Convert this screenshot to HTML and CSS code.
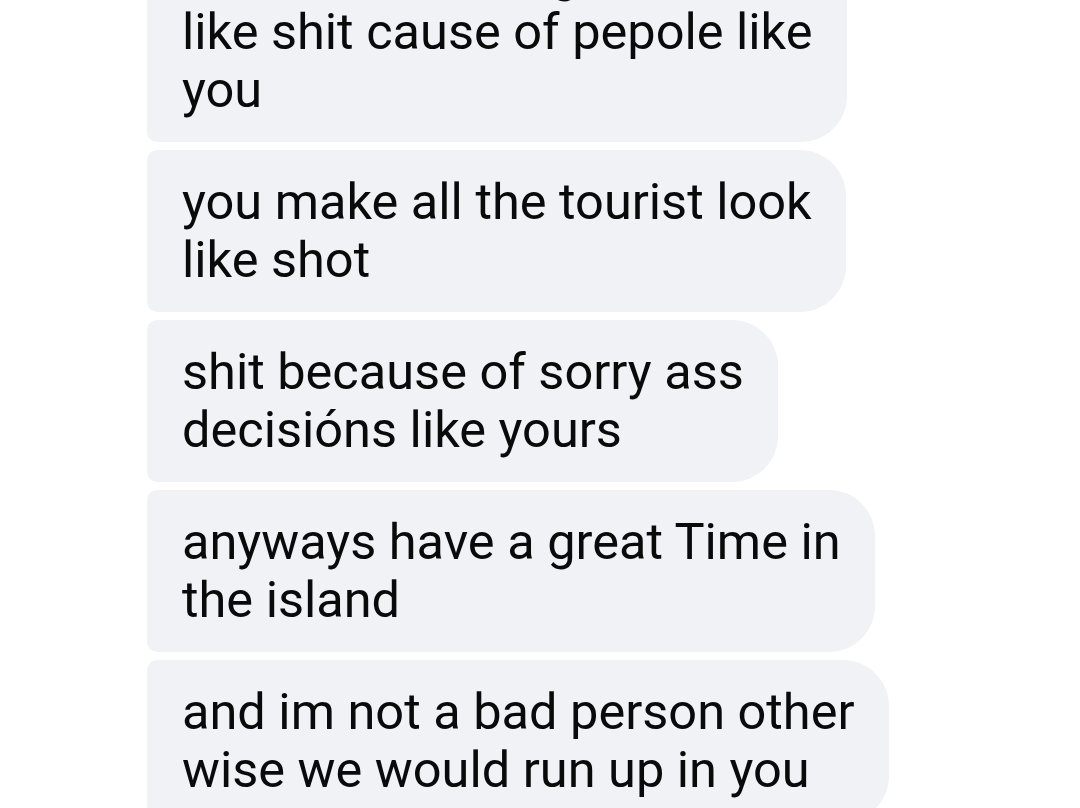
FILE: index.html
```html
<!DOCTYPE html>
<html lang="en">
<head>
<meta charset="utf-8">
<title>Messages</title>
<link rel="stylesheet" href="styles.css">
</head>
<body>
<main class="thread">
  <div class="bubble">well, the islands gonna look<br>like shit cause of pepole like<br>you</div>
  <div class="bubble">you make all the tourist look<br>like shot</div>
  <div class="bubble">shit because of sorry ass<br>decisións like yours</div>
  <div class="bubble">anyways have a great Time in<br>the island</div>
  <div class="bubble">and im not a bad person other<br>wise we would run up in you</div>
</main>
</body>
</html>
```
FILE: styles.css
```css
html, body {
  margin: 0;
  padding: 0;
  background: #ffffff;
  overflow: hidden;
}

.thread {
  display: flex;
  flex-direction: column;
  align-items: flex-start;
  gap: 8px;
  margin-top: -78px;
  padding-left: 147px;
}

.bubble {
  background: #f1f2f6;
  color: #0a0a0a;
  font-family: Roboto, "Noto Sans", sans-serif;
  font-size: 50.5px;
  line-height: 58px;
  padding: 23px 34px 23px 35px;
  border-radius: 10px 46px 46px 10px;
  white-space: nowrap;
}
```
